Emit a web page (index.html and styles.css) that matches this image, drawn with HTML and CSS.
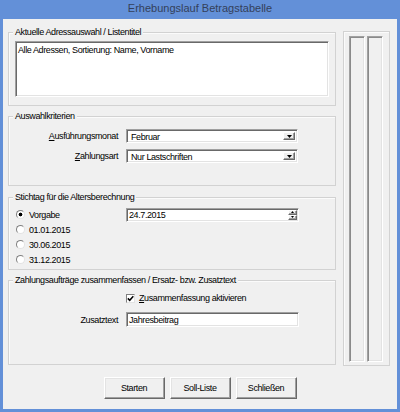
FILE: index.html
```html
<!DOCTYPE html>
<html>

<head>
    <meta name="viewport" content="width=device-width, initial-scale=1">
    <link rel="stylesheet" href="styles.css">
</head>

<body>
    <div class="window">
        <div class="titlebar">Erhebungslauf Betragstabelle</div>
        <div class="client">
            <div class="main">
                <div class="groups">
                    <div class="group g-list">
                        <div class="group-title">Aktuelle Adressauswahl / Listentitel</div>
                        <div class="listbox">Alle Adressen, Sortierung: Name, Vorname</div>
                    </div>

                    <div class="group g-criteria">
                        <div class="group-title">Auswahlkriterien</div>
                        <div class="rows">
                            <div class="field-row">
                                <span class="field-label"><u>A</u>usführungsmonat</span>
                                <div class="combo">
                                    <span class="combo-text">Februar</span>
                                    <span class="combo-btn"><svg width="5" height="3" viewBox="0 0 5 3"><polygon points="0,0 5,0 2.5,3" fill="#000" /></svg></span>
                                </div>
                            </div>
                            <div class="field-row">
                                <span class="field-label"><u>Z</u>ahlungsart</span>
                                <div class="combo">
                                    <span class="combo-text">Nur Lastschriften</span>
                                    <span class="combo-btn"><svg width="5" height="3" viewBox="0 0 5 3"><polygon points="0,0 5,0 2.5,3" fill="#000" /></svg></span>
                                </div>
                            </div>
                        </div>
                    </div>

                    <div class="group g-date">
                        <div class="group-title">Stichtag für die Altersberechnung</div>
                        <div class="radio-list">
                            <div class="radio-row">
                                <span class="radio-opt"><span class="radio checked"></span>Vorgabe</span>
                                <div class="spin">
                                    <span class="spin-text">24.7.2015</span>
                                    <span class="spin-btns">
                                        <span class="spin-btn"><svg width="3" height="2" viewBox="0 0 3 2"><polygon points="1.5,0 3,2 0,2" fill="#000" /></svg></span>
                                        <span class="spin-btn"><svg width="3" height="2" viewBox="0 0 3 2"><polygon points="0,0 3,0 1.5,2" fill="#000" /></svg></span>
                                    </span>
                                </div>
                            </div>
                            <div class="radio-row"><span class="radio-opt"><span class="radio"></span>01.01.2015</span></div>
                            <div class="radio-row"><span class="radio-opt"><span class="radio"></span>30.06.2015</span></div>
                            <div class="radio-row"><span class="radio-opt"><span class="radio"></span>31.12.2015</span></div>
                        </div>
                    </div>

                    <div class="group g-merge">
                        <div class="group-title">Zahlungsaufträge zusammenfassen / Ersatz- bzw. Zusatztext</div>
                        <div class="check-row">
                            <span class="checkbox"><svg width="7" height="7" viewBox="0 0 7 7"><path d="M0.8 3.4 L2.7 5.3 L6.3 1.2" fill="none" stroke="#000" stroke-width="1.5" /></svg></span>
                            <span><u>Z</u>usammenfassung aktivieren</span>
                        </div>
                        <div class="field-row text-row">
                            <span class="field-label">Zusatztext</span>
                            <div class="textbox">Jahresbeitrag</div>
                        </div>
                    </div>
                </div>

                <div class="side">
                    <div class="side-col"></div>
                    <div class="side-col"></div>
                </div>
            </div>

            <div class="buttons">
                <button class="btn">Starten</button>
                <button class="btn">Soll-Liste</button>
                <button class="btn">Schließen</button>
            </div>
        </div>
    </div>
</body>

</html>
```

FILE: styles.css
```css
* {
    box-sizing: border-box;
}

body {
    margin: 0;
    font-family: "Liberation Sans", Arial, sans-serif;
    font-size: 9px;
    letter-spacing: -0.4px;
    color: #000;
    background-color: #fff;
}

/* window frame */
.window {
    width: 400px;
    height: 412px;
    background-color: #6390d8;
    padding: 0 3px 3px 3px;
    display: flex;
    flex-direction: column;
}

.titlebar {
    height: 19px;
    line-height: 17px;
    text-align: center;
    font-size: 11px;
    letter-spacing: 0;
    color: #34405a;
}

.client {
    flex: 1;
    background-color: #f0f0f0;
}

.main {
    display: flex;
    padding: 12px 0 0 5px;
}

.groups {
    width: 328px;
    padding-top: 1px;
}

/* group boxes */
.group {
    border: 1px solid #d2d2d2;
    box-shadow: inset 1px 1px 0 #fbfbfb;
}

.group-title {
    width: fit-content;
    margin: -6px 0 0 4px;
    padding: 0 2px;
    line-height: 11px;
    background-color: #f0f0f0;
}

.g-list {
    height: 74px;
}

.g-criteria {
    height: 70px;
    margin-top: 10px;
}

.g-date {
    height: 73px;
    margin-top: 11px;
}

.g-merge {
    height: 85px;
    margin-top: 10px;
}

/* sunken fields */
.listbox,
.combo,
.spin,
.textbox {
    background-color: #fff;
    border: 1px solid;
    border-color: #a0a0a0 #fff #fff #a0a0a0;
    box-shadow: inset 1px 1px 0 #696969, inset -1px -1px 0 #e3e3e3;
}

.listbox {
    width: 314px;
    height: 56px;
    margin: 3px 0 0 6px;
    padding: 3px 2px;
    line-height: 10px;
}

.rows {
    margin-top: 7px;
    display: flex;
    flex-direction: column;
    gap: 6px;
}

.field-row {
    display: flex;
    align-items: center;
    height: 14px;
}

.field-label {
    width: 109px;
    margin-right: 8px;
    text-align: right;
}

.combo {
    width: 172px;
    height: 14px;
    display: flex;
    align-items: stretch;
    padding: 2px;
}

.combo-text {
    flex: 1;
    padding-left: 2px;
    line-height: 10px;
}

.combo-btn,
.spin-btn {
    background-color: #f0f0f0;
    border: 1px solid;
    border-color: #fff #696969 #696969 #fff;
    box-shadow: inset -1px -1px 0 #a0a0a0;
    display: flex;
    align-items: center;
    justify-content: center;
}

.combo-btn {
    width: 12px;
}

/* radio buttons */
.radio-list {
    margin-top: 4px;
}

.radio-row {
    display: flex;
    align-items: center;
    height: 15px;
}

.radio-opt {
    width: 117px;
    display: flex;
    align-items: center;
}

.radio {
    width: 9px;
    height: 9px;
    margin: 0 4px 0 7px;
    border-radius: 50%;
    border: 1px solid;
    border-color: #808080 #e3e3e3 #e3e3e3 #808080;
    background-color: #fff;
}

.radio.checked {
    background: radial-gradient(circle, #000 0 1.6px, #fff 2.2px);
}

.spin {
    width: 173px;
    height: 14px;
    display: flex;
    padding: 1px;
}

.spin-text {
    flex: 1;
    padding-left: 1px;
    line-height: 11px;
}

.spin-btns {
    width: 9px;
    display: flex;
    flex-direction: column;
}

.spin-btn {
    flex: 1;
}

/* merge group */
.check-row {
    display: flex;
    align-items: center;
    height: 14px;
    margin-top: 5px;
    padding-left: 117px;
}

.checkbox {
    width: 9px;
    height: 9px;
    margin-right: 4px;
    background-color: #fff;
    border: 1px solid;
    border-color: #808080 #e3e3e3 #e3e3e3 #808080;
    display: flex;
    align-items: center;
    justify-content: center;
}

.text-row {
    height: 15px;
    margin-top: 7px;
}

.textbox {
    width: 173px;
    height: 15px;
    padding: 2px 1px 0 2px;
    line-height: 11px;
}

/* right-hand panel */
.side {
    width: 47px;
    height: 335px;
    margin-left: 7px;
    padding: 4px 6px 3px 5px;
    border: 1px solid #d2d2d2;
    box-shadow: inset 1px 1px 0 #fbfbfb;
    display: flex;
    gap: 2px;
}

.side-col {
    width: 16px;
    height: 326px;
    border: 1px solid;
    border-color: #a0a0a0 #fff #fff #a0a0a0;
    box-shadow: inset 1px 1px 0 #8a8a8a, inset -1px -1px 0 #e3e3e3;
}

/* buttons */
.buttons {
    display: flex;
    justify-content: center;
    gap: 5px;
    margin-top: 11px;
}

.btn {
    width: 61px;
    height: 22px;
    padding: 0;
    font-family: inherit;
    font-size: 9px;
    letter-spacing: -0.4px;
    color: #000;
    background-color: #f0f0f0;
    border: 1px solid;
    border-color: #fff #696969 #696969 #fff;
    box-shadow: inset -1px -1px 0 #a0a0a0, inset 1px 1px 0 #e3e3e3;
}
```
